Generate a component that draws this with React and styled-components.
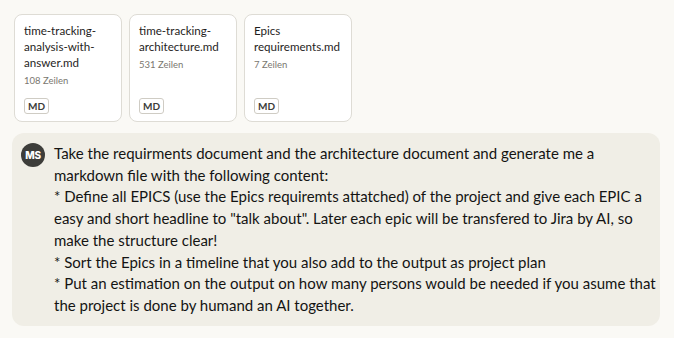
import React from "react";
import styled, { createGlobalStyle } from "styled-components";

const Global = createGlobalStyle`
  html, body { margin: 0; padding: 0; background: #faf9f5; }
  body { font-family: "Lato", "Noto Sans", sans-serif; color: #141413; }
`;

const Page = styled.div`
  display: flex;
  flex-direction: column;
  gap: 11px;
  padding: 14px 14px 12px 12px;
  width: 674px;
  height: 338px;
  box-sizing: border-box;
`;

const Files = styled.div`
  display: flex;
  gap: 7px;
  padding-left: 2px;
`;

const Card = styled.div`
  width: 108px;
  height: 108px;
  box-sizing: border-box;
  background: #ffffff;
  border: 1px solid #dedcd5;
  border-radius: 8px;
  padding: 8px 8px 7px 9px;
  display: flex;
  flex-direction: column;
`;

const FileName = styled.div`
  font-size: 11.6px;
  line-height: 16px;
  color: #1f1e1d;
  overflow-wrap: anywhere;
`;

const Lines = styled.div`
  font-size: 9.5px;
  line-height: 14px;
  color: #7a776f;
  margin-top: 3px;
`;

const Badge = styled.span`
  margin-top: auto;
  align-self: flex-start;
  font-size: 10px;
  font-weight: 700;
  line-height: 12px;
  color: #3d3d3a;
  border: 1px solid #cfccc4;
  border-radius: 3px;
  padding: 1px 3px;
  background: #fff;
`;

const Bubble = styled.div`
  display: flex;
  align-items: flex-start;
  gap: 9px;
  background: #f0eee6;
  border-radius: 12px;
  padding: 10px 10px 9px 9px;
  width: 648px;
  box-sizing: border-box;
`;

const Avatar = styled.div`
  flex: none;
  width: 24px;
  height: 24px;
  border-radius: 50%;
  background: #3d3d3a;
  color: #fff;
  font-family: "Inter", sans-serif;
  font-size: 10px;
  font-weight: 800;
  letter-spacing: -0.3px;
  display: flex;
  align-items: center;
  justify-content: center;
`;

const Message = styled.div`
  font-size: 15px;
  line-height: 21.7px;
  color: #141413;
  white-space: pre;
`;

const files = [
  { name: "time-tracking-analysis-with-answer.md", lines: 108 },
  { name: "time-tracking-architecture.md", lines: 531 },
  { name: "Epics requirements.md", lines: 7 },
];

const text = `Take the requirments document and the architecture document and generate me a
markdown file with the following content:
* Define all EPICS (use the Epics requiremts attatched) of the project and give each EPIC a
easy and short headline to "talk about". Later each epic will be transfered to Jira by AI, so
make the structure clear!
* Sort the Epics in a timeline that you also add to the output as project plan
* Put an estimation on the output on how many persons would be needed if you asume that
the project is done by humand an AI together.`;

export default function App() {
  return (
    <>
      <Global />
      <Page>
        <Files>
          {files.map((f) => (
            <Card key={f.name}>
              <FileName>{f.name}</FileName>
              <Lines>{f.lines} Zeilen</Lines>
              <Badge>MD</Badge>
            </Card>
          ))}
        </Files>
        <Bubble>
          <Avatar>MS</Avatar>
          <Message>{text}</Message>
        </Bubble>
      </Page>
    </>
  );
}
